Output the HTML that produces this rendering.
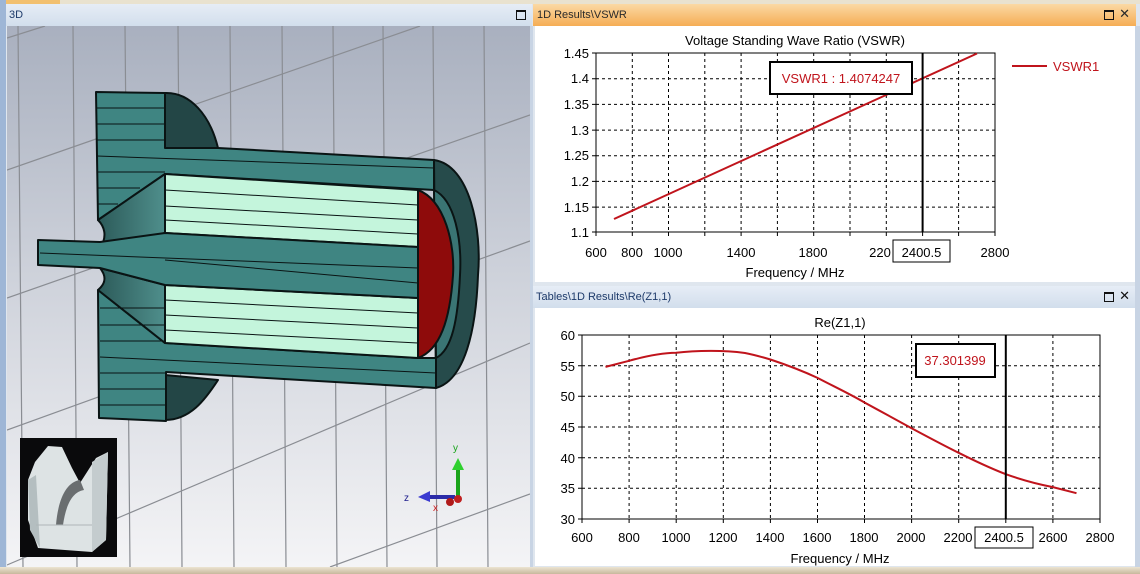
<!DOCTYPE html>
<html><head><meta charset="utf-8"><style>
body{margin:0;width:1140px;height:574px;overflow:hidden;background:#dfe6ee;font-family:"Liberation Sans","DejaVu Sans",sans-serif;position:relative}
.abs{position:absolute}
</style></head><body>
<div class="abs" style="left:0;top:0;width:1140px;height:4px;background:linear-gradient(90deg,#f2c070 0,#f2c070 60px,#e9e2cf 60px)"></div>
<div class="abs" style="left:0;top:0;width:6px;height:574px;background:#9eb6d6"></div>
<div class="abs" style="left:0;top:567px;width:1140px;height:7px;background:linear-gradient(#ece4d2,#c7b89c)"></div>
<div class="abs" style="left:6px;top:4px;width:526px;height:22px;background:linear-gradient(#e6edf6,#d2deec);font-size:11px;color:#1d3a6a">
<span style="position:absolute;left:3px;top:5px">3D</span>
<span style="position:absolute;right:6px;top:6px;width:8px;height:7px;border:1px solid #111;border-top-width:2px"></span></div>
<svg class="abs" style="left:7px;top:26px" width="523" height="541" viewBox="7 26 523 541">
<defs><linearGradient id="bg" x1="0" y1="0" x2="0" y2="1"><stop offset="0" stop-color="#a9b0bf"/><stop offset="0.45" stop-color="#cdd1da"/><stop offset="1" stop-color="#f4f4f6"/></linearGradient>
<linearGradient id="cone" x1="0" y1="0" x2="1" y2="0"><stop offset="0" stop-color="#2c5a59"/><stop offset="1" stop-color="#4f8f8c"/></linearGradient></defs>
<rect x="7" y="26" width="523" height="541" fill="url(#bg)"/>
<g stroke="#8a8d93" stroke-width="1.2" fill="none">
<path d="M18 26 L23 567M73 26 L77 567M125 26 L130 567M178 26 L182 567M230 26 L234 567M282 26 L286 567M333 26 L337 567M383 26 L387 567M433 26 L437 567M484 26 L488 567"/>
<path d="M7 38 L45 26M7 170 L420 26M7 298 L530 115M7 430 L530 241M7 565 L530 343M330 567 L530 494"/>
</g>
<g stroke="#0a1414" stroke-width="2" stroke-linejoin="round">
<path d="M434 160 C470 165 482 230 478 275 C476 330 465 380 436 388 Z" fill="#264b4b"/>
<path d="M434 190 C455 200 462 240 460 275 C458 320 452 350 436 358 Z" fill="#3a7574"/>
<path d="M165 93 C190 92 210 115 218 148 L165 148 Z" fill="#234646"/>
<path d="M165 420 C190 420 205 400 218 380 L165 375 Z" fill="#234646"/>
<path d="M96 92 L165 93 L165 148 L218 148 L434 160 L434 190 L165 174 L98 220 Z" fill="#3f8582"/>
<path d="M98 290 L165 343 L418 358 L436 358 L436 388 L166 372 L166 421 L99 418 Z" fill="#3f8582"/>
<path d="M98 220 L165 174 L165 233 L100 248 C108 236 104 226 98 220Z" fill="url(#cone)"/>
<path d="M98 290 L165 343 L165 285 L100 268 C108 278 104 285 98 290Z" fill="url(#cone)"/>
<path d="M165 174 L418 190 L418 247 L165 233 Z" fill="#c4f5dc"/>
<path d="M165 285 L418 298 L418 358 L165 343 Z" fill="#c4f5dc"/>
<path d="M38 240 L100 242 L165 233 L418 247 L418 298 L165 285 L100 268 L38 265 Z" fill="#3f8582"/>
<path d="M418 190 C445 200 455 245 453 275 C450 320 440 350 418 358 Z" fill="#8e0b0b"/>
</g>
<g stroke="#0a1414" stroke-width="1">
<path d="M96 108 H165 M96 124 H165 M96 140 H165 M97 156 L434 168 M97 172 L165 172 M97 188 H140 M97 204 H118"/>
<path d="M165 190 L418 205 M165 206 L418 220 M165 220 L418 234"/>
<path d="M40 253 L418 268 M165 260 L418 283"/>
<path d="M165 300 L418 313 M165 315 L418 328 M165 330 L418 343"/>
<path d="M100 308 H165 M100 325 H165 M100 341 H165 M100 357 L436 373 M100 373 H165 M100 389 H165 M100 405 H165"/>
</g>
<rect x="20" y="438" width="97" height="119" fill="#0a0a0c"/>
<path d="M28 480 L35 462 L48 446 L62 447 L72 468 L80 483 L96 458 L108 452 L106 540 L92 552 L38 548 L28 520 Z" fill="#dde3e4"/>
<path d="M28 480 L36 475 L40 548 L30 530 Z" fill="#b4bec0"/>
<path d="M92 462 L108 452 L106 540 L92 552 Z" fill="#c4ccce"/>
<path d="M56 525 C58 500 66 482 80 480 L84 490 C72 492 66 505 63 525 Z" fill="#6a6e70"/>
<path d="M36 525 L92 525" stroke="#aeb6b8" stroke-width="1"/>
<path d="M458 497 L458 468" stroke="#1aa31a" stroke-width="4"/>
<path d="M452 470 L458 458 L464 470 Z" fill="#2fd02f"/>
<path d="M455 497 L428 497" stroke="#2b2ba8" stroke-width="4"/>
<path d="M430 491 L418 497 L430 502 Z" fill="#3a3ad0"/>
<circle cx="450" cy="502" r="4" fill="#b01a1a"/><circle cx="458" cy="499" r="4" fill="#c02020"/>
<text x="453" y="451" font-size="10" fill="#1aa31a" font-family="Liberation Sans">y</text>
<text x="404" y="501" font-size="10" fill="#1c1c8c" font-family="Liberation Sans">z</text>
<text x="433" y="511" font-size="10" fill="#d02020" font-family="Liberation Sans">x</text>
</svg>
<div class="abs" style="left:530px;top:26px;width:3px;height:541px;background:#c8d4e4"></div>
<div class="abs" style="left:533px;top:4px;width:603px;height:22px;background:linear-gradient(#fbd9a4,#f5ad55);font-size:11px;color:#2a2a2a">
<span style="position:absolute;left:4px;top:5px">1D Results\VSWR</span>
<span style="position:absolute;right:22px;top:6px;width:8px;height:7px;border:1px solid #111;border-top-width:2px"></span>
<span style="position:absolute;right:6px;top:2px;font-size:13px">✕</span></div>
<svg class="abs" style="left:535px;top:26px" width="600" height="256" viewBox="535 26 600 256" font-family="Liberation Sans,DejaVu Sans,sans-serif">
<rect x="535" y="26" width="600" height="256" fill="#fff"/>
<text x="795" y="45" font-size="13" text-anchor="middle">Voltage Standing Wave Ratio (VSWR)</text>
<g stroke="#000" stroke-width="1" stroke-dasharray="3,3">
<path d="M632.3 53V232M668.5 53V232M704.8 53V232M741.1 53V232M777.4 53V232M813.7 53V232M850 53V232M886.3 53V232M958.6 53V232"/>
<path d="M596 78.7H995M596 104.4H995M596 130.1H995M596 155.7H995M596 181.4H995M596 207.1H995"/>
</g>
<rect x="596" y="53" width="399" height="179" fill="none" stroke="#000"/>
<g stroke="#000"><path d="M592 53H596M592 78.7H596M592 104.4H596M592 130.1H596M592 155.7H596M592 181.4H596M592 207.1H596M592 232H596"/>
<path d="M596 232v4M632.3 232v4M668.5 232v4M704.8 232v4M741.1 232v4M777.4 232v4M813.7 232v4M850 232v4M886.3 232v4M922.6 232v4M958.6 232v4M995 232v4"/></g>
<line x1="614" y1="219" x2="977" y2="53.5" stroke="#c0141c" stroke-width="2"/>
<line x1="922.6" y1="53" x2="922.6" y2="232" stroke="#000" stroke-width="2"/>
<g font-size="13" text-anchor="end"><text x="589" y="58">1.45</text><text x="589" y="83">1.4</text><text x="589" y="109">1.35</text><text x="589" y="135">1.3</text><text x="589" y="160">1.25</text><text x="589" y="186">1.2</text><text x="589" y="212">1.15</text><text x="589" y="237">1.1</text></g>
<g font-size="13" text-anchor="middle"><text x="596" y="257">600</text><text x="632" y="257">800</text><text x="668" y="257">1000</text><text x="741" y="257">1400</text><text x="813" y="257">1800</text><text x="880" y="257">220</text><text x="995" y="257">2800</text></g>
<rect x="893" y="240" width="57" height="22" fill="#fff" stroke="#000"/>
<text x="921.5" y="257" font-size="13" text-anchor="middle">2400.5</text>
<text x="795" y="277" font-size="13" text-anchor="middle">Frequency / MHz</text>
<rect x="770" y="62" width="142" height="32" fill="#fff" stroke="#000" stroke-width="2"/>
<text x="841" y="83" font-size="13" text-anchor="middle" fill="#c0141c">VSWR1 : 1.4074247</text>
<line x1="1012" y1="66" x2="1047" y2="66" stroke="#c0141c" stroke-width="2"/>
<text x="1053" y="71" font-size="13" fill="#c0141c">VSWR1</text>
</svg>
<div class="abs" style="left:533px;top:286px;width:603px;height:22px;background:linear-gradient(#e6edf6,#d2deec);font-size:11px;color:#1d3a6a">
<span style="position:absolute;left:3px;top:5px">Tables\1D Results\Re(Z1,1)</span>
<span style="position:absolute;right:22px;top:6px;width:8px;height:7px;border:1px solid #111;border-top-width:2px"></span>
<span style="position:absolute;right:6px;top:2px;font-size:13px;color:#111">✕</span></div>
<svg class="abs" style="left:535px;top:308px" width="600" height="258" viewBox="535 308 600 258" font-family="Liberation Sans,DejaVu Sans,sans-serif">
<rect x="535" y="308" width="600" height="258" fill="#fff"/>
<text x="840" y="327" font-size="13" text-anchor="middle">Re(Z1,1)</text>
<g stroke="#000" stroke-width="1" stroke-dasharray="3,3">
<path d="M629.1 335V519M676.2 335V519M723.3 335V519M770.4 335V519M817.5 335V519M864.5 335V519M911.6 335V519M958.7 335V519M1052.9 335V519"/>
<path d="M582 365.7H1100M582 396.3H1100M582 427H1100M582 457.7H1100M582 488.3H1100"/>
</g>
<rect x="582" y="335" width="518" height="184" fill="none" stroke="#000"/>
<g stroke="#000"><path d="M578 335H582M578 365.7H582M578 396.3H582M578 427H582M578 457.7H582M578 488.3H582M578 519H582"/>
<path d="M582 519v4M629.1 519v4M676.2 519v4M723.3 519v4M770.4 519v4M817.5 519v4M864.5 519v4M911.6 519v4M958.7 519v4M1005.8 519v4M1052.9 519v4M1100 519v4"/></g>
<path d="M605.5 366.9 L629.1 360.8 C650 355 665 353 676.2 352.8 C690 351 700 350.9 711 350.9 C720 350.9 730 351 745 353 C755 355 762 357 770.4 359.5 C790 366 805 372 817.5 377.9 C835 387 850 394 864.5 402.5 C880 411 895 419 911.6 428.2 C928 437 943 445 958.7 452.8 C975 461 990 468 1005.8 474.2 C1022 480 1037 484 1052.9 487.1 L1076.5 493.2" fill="none" stroke="#c0141c" stroke-width="2"/>
<line x1="1005.8" y1="335" x2="1005.8" y2="519" stroke="#000" stroke-width="2"/>
<g font-size="13" text-anchor="end"><text x="575" y="340">60</text><text x="575" y="371">55</text><text x="575" y="401">50</text><text x="575" y="432">45</text><text x="575" y="463">40</text><text x="575" y="493">35</text><text x="575" y="524">30</text></g>
<g font-size="13" text-anchor="middle"><text x="582" y="542">600</text><text x="629" y="542">800</text><text x="676" y="542">1000</text><text x="723" y="542">1200</text><text x="770" y="542">1400</text><text x="817" y="542">1600</text><text x="864" y="542">1800</text><text x="911" y="542">2000</text><text x="958" y="542">2200</text><text x="1053" y="542">2600</text><text x="1100" y="542">2800</text></g>
<rect x="975" y="527" width="58" height="21" fill="#fff" stroke="#000"/>
<text x="1004" y="542" font-size="13" text-anchor="middle">2400.5</text>
<text x="840" y="563" font-size="13" text-anchor="middle">Frequency / MHz</text>
<rect x="916" y="344" width="79" height="33" fill="#fff" stroke="#000" stroke-width="2"/>
<text x="955" y="365" font-size="13" text-anchor="middle" fill="#c0141c">37.301399</text>
</svg>
<div class="abs" style="left:1135px;top:26px;width:5px;height:541px;background:#c8d4e4"></div>
</body></html>
